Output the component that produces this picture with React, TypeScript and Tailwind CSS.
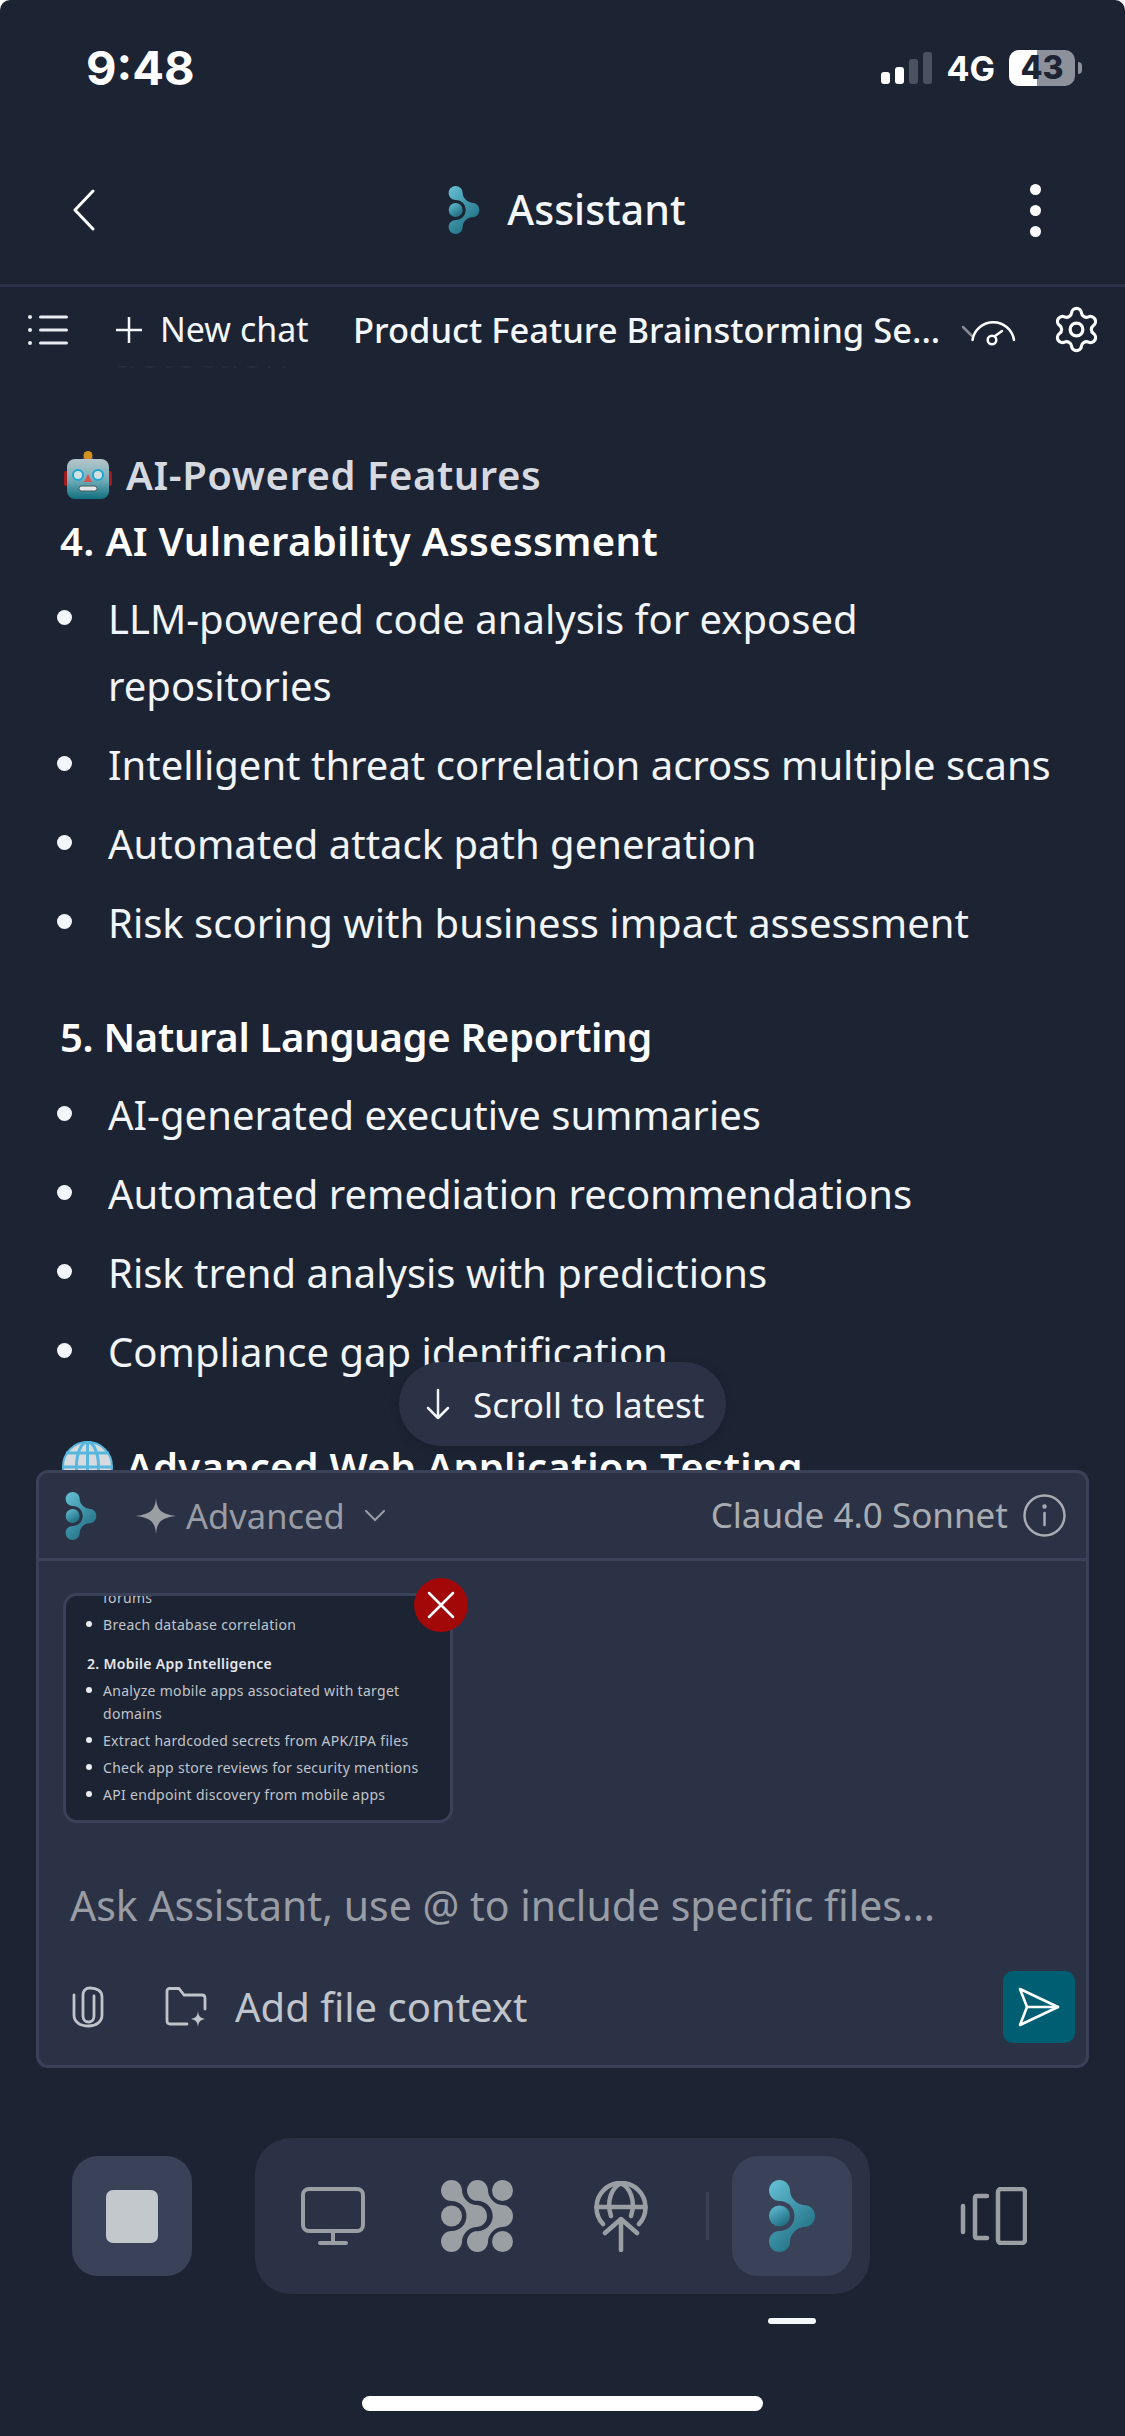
import { Settings } from 'lucide-react';

const fontStack = '[font-family:"Noto_Sans",sans-serif]';

const logoPath =
  'M10.5 0C16.3 0 21 4.7 21 10.5C21 17 27 24.5 35 25C41 25 46 29.5 46 36C46 42.5 41 47 35 47C27 47.5 21 55 21 61.5C21 67.3 16.3 72 10.5 72C4.7 72 0 67.3 0 61.5C0 55.7 4.7 51 10.5 51C19 51 25.5 44.5 25.5 36C25.5 27.5 19 21 10.5 21C4.7 21 0 16.3 0 10.5C0 4.7 4.7 0 10.5 0Z';

const sections = [
  {
    title: '4. AI Vulnerability Assessment',
    titleClass: 'tracking-[0.36px]',
    items: [
      ['LLM-powered code analysis for exposed', 'repositories'],
      ['Intelligent threat correlation across multiple scans'],
      ['Automated attack path generation'],
      ['Risk scoring with business impact assessment'],
    ],
  },
  {
    title: '5. Natural Language Reporting',
    titleClass: '-tracking-[0.3px]',
    items: [
      ['AI-generated executive summaries'],
      ['Automated remediation recommendations'],
      ['Risk trend analysis with predictions'],
      ['Compliance gap identification'],
    ],
  },
];

const thumbItems = [
  ['Analyze mobile apps associated with target', 'domains'],
  ['Extract hardcoded secrets from APK/IPA files'],
  ['Check app store reviews for security mentions'],
  ['API endpoint discovery from mobile apps'],
];

function Logo({ id, className }: { id: string; className: string }) {
  return (
    <svg viewBox="0 0 46 72" className={className}>
      <defs>
        <linearGradient id={id} x1="0.1" y1="0" x2="0.75" y2="1">
          <stop offset="0" stopColor="#63bdd2" />
          <stop offset="0.55" stopColor="#3b8ea3" />
          <stop offset="1" stopColor="#1c6a7d" />
        </linearGradient>
      </defs>
      <path fill={`url(#${id})`} d={logoPath} />
      <circle cx="10.5" cy="36" r="10.5" fill={`url(#${id})`} />
    </svg>
  );
}

function RobotEmoji() {
  return (
    <svg viewBox="0 0 48 48" className="ml-[4px] h-[48px] w-[48px] shrink-0">
      <defs>
        <linearGradient id="robotFace" x1="0" y1="0" x2="0" y2="1">
          <stop offset="0" stopColor="#b5c4c8" />
          <stop offset="0.5" stopColor="#76b0bb" />
          <stop offset="1" stopColor="#11707f" />
        </linearGradient>
      </defs>
      <rect x="0" y="20" width="5" height="15" rx="2" fill="#a11a1e" />
      <rect x="43" y="20" width="5" height="15" rx="2" fill="#a11a1e" />
      <ellipse cx="24" cy="8.5" rx="5.5" ry="3.5" fill="#6a5690" />
      <circle cx="24" cy="4.5" r="4.5" fill="#d2911f" />
      <rect x="3" y="8" width="42" height="40" rx="8" fill="url(#robotFace)" />
      <circle cx="14" cy="24" r="5" fill="#d3e0e2" stroke="#1ba7cf" strokeWidth="2" />
      <circle cx="34" cy="24" r="5" fill="#d3e0e2" stroke="#1ba7cf" strokeWidth="2" />
      <path d="M24 23l4 8h-8z" fill="#d9544f" />
      <rect x="15" y="35" width="18" height="5" rx="2.5" fill="#e2e7e8" stroke="#48585e" strokeWidth="1" />
    </svg>
  );
}

function GlobeEmoji() {
  return (
    <svg viewBox="0 0 51 51" className="ml-[2px] h-[51px] w-[51px] shrink-0">
      <circle cx="25.5" cy="25.5" r="24.5" fill="#d7dbe0" stroke="#58b7de" strokeWidth="2" />
      <g fill="none" stroke="#58b7de" strokeWidth="3">
        <ellipse cx="25.5" cy="25.5" rx="11" ry="24.5" />
        <path d="M25.5 1V50M4 12H47M1 26H50" />
      </g>
    </svg>
  );
}

function GridIcon() {
  return (
    <svg viewBox="0 0 72 72" className="h-[72px] w-[72px]" fill="#9a9fa4">
      <circle cx="61.5" cy="10.5" r="10.5" />
      <circle cx="61.5" cy="61.5" r="10.5" />
      <g transform="translate(26 0)">
        <path d={logoPath} />
      </g>
      <path d="M22 4C20 16 27 22 32 24" fill="none" stroke="#2c3245" strokeWidth="3" />
      <path d="M22 68C20 56 27 50 32 48" fill="none" stroke="#2c3245" strokeWidth="3" />
      <path d={logoPath} />
      <circle cx="10.5" cy="36" r="10.5" />
      <path d="M36 22C46 24 50 30 50 36C50 42 46 48 36 50" fill="none" stroke="#2c3245" strokeWidth="3" />
    </svg>
  );
}

function BulletRow({ lines }: { lines: string[] }) {
  return (
    <li className="flex">
      <span className="mt-[25px] -ml-[3px] mr-[36px] h-[15px] w-[15px] shrink-0 rounded-full bg-[#f3f6fa]" />
      <span>
        {lines.map((line) => (
          <span key={line} className="block whitespace-nowrap">
            {line}
          </span>
        ))}
      </span>
    </li>
  );
}

export default function App() {
  return (
    <div className={`flex h-[2436px] w-[1125px] flex-col overflow-hidden rounded-t-[10px] bg-[#1c2333] ${fontStack}`}>
      {/* status bar */}
      <div className="flex h-[136px] shrink-0 items-center justify-between pl-[86px] pr-[43px] text-white">
        <span className="text-[47px] font-bold [font-family:Inter,sans-serif]">9:48</span>
        <div className="flex items-center">
          <div className="flex items-end gap-[5px]">
            <span className="h-[12px] w-[9px] rounded-[3px] bg-white" />
            <span className="h-[17px] w-[9px] rounded-[3px] bg-white" />
            <span className="h-[25px] w-[9px] rounded-[3px] bg-[#4a5160]" />
            <span className="h-[32px] w-[9px] rounded-[3px] bg-[#4a5160]" />
          </div>
          <span className="ml-[14px] text-[34px] font-bold [font-family:Inter,sans-serif]">4G</span>
          <div className="relative ml-[14px] flex h-[36px] w-[66px] items-center justify-center overflow-hidden rounded-[10px] bg-[#8d919c]">
            <span className="absolute inset-y-0 left-0 w-[28px] bg-white" />
            <span className="relative text-[32px] font-extrabold leading-none text-[#1c2333] [font-family:Inter,sans-serif]">43</span>
          </div>
          <span className="ml-[3px] h-[12px] w-[4px] rounded-r-full bg-[#8d919c]" />
        </div>
      </div>

      {/* title bar */}
      <div className="flex h-[151px] shrink-0 items-center justify-between border-b-[3px] border-[#2c3245] pl-[72px] pr-[84px]">
        <svg viewBox="0 0 24 42" className="h-[42px] w-[24px]" fill="none" stroke="#ffffff" strokeWidth="3" strokeLinecap="round" strokeLinejoin="round">
          <path d="M21 2L3 21L21 40" />
        </svg>
        <div className="ml-[8px] flex items-center gap-[27px]">
          <Logo id="navLogo" className="h-[48px] w-[32px]" />
          <span className="text-[41px] font-medium text-[#f4f7fb]">Assistant</span>
        </div>
        <div className="flex flex-col gap-[10px]">
          <span className="h-[11px] w-[11px] rounded-full bg-white" />
          <span className="h-[11px] w-[11px] rounded-full bg-white" />
          <span className="h-[11px] w-[11px] rounded-full bg-white" />
        </div>
      </div>

      {/* chat toolbar */}
      <div className="flex h-[79px] shrink-0 items-center pl-[28px] pt-[6px] text-[#f4f7fb]">
        <svg viewBox="0 0 40 30" className="h-[30px] w-[40px]" fill="#e8ecf1">
          <circle cx="2" cy="2" r="2" />
          <circle cx="2" cy="15" r="2" />
          <circle cx="2" cy="28" r="2" />
          <rect x="11" y="0.5" width="29" height="3" rx="1.5" />
          <rect x="11" y="13.5" width="29" height="3" rx="1.5" />
          <rect x="11" y="26.5" width="29" height="3" rx="1.5" />
        </svg>
        <svg viewBox="0 0 28 28" className="ml-[47px] h-[28px] w-[28px]" stroke="#f4f7fb" strokeWidth="2.5">
          <path d="M14 1V27M1 14H27" />
        </svg>
        <span className="ml-[17px] w-[193px] whitespace-nowrap text-[34px]">New chat</span>
        <span className="w-[607px] whitespace-nowrap text-[34.5px] font-medium">Product Feature Brainstorming Se...</span>
        <svg viewBox="20 22 58 32" className="h-[32px] w-[58px]" fill="none" stroke="#ffffff" strokeWidth="2.5" strokeLinecap="round">
          <path d="M23 35L32 44" stroke="#878b92" />
          <path d="M32.5 48A21 21 0 0 1 74 48" />
          <circle cx="52" cy="48" r="4.3" />
          <path d="M55 44L62 39" />
        </svg>
        <Settings className="ml-[33px] h-[51px] w-[51px]" strokeWidth={1.5} color="#ffffff" />
      </div>

      {/* messages, clipped by the composer */}
      <div className="relative h-[1104px] shrink-0 overflow-hidden px-[60px] text-[40px] leading-[67px] text-[#f1f4f8]">
        <p className="-mt-[47px] pl-[52px] text-[#262c3c]">detection</p>
        <h3 className="mt-[55px] flex items-center gap-[14px] font-semibold tracking-[0.55px] text-[#d6dae0]">
          <RobotEmoji />
          AI-Powered Features
        </h3>
        {sections.map((section, index) => (
          <section key={section.title} className={index === 0 ? '-mt-[1px]' : 'mt-[47px]'}>
            <h4 className={`font-semibold text-white ${section.titleClass}`}>{section.title}</h4>
            <ul className="mt-[11px] flex flex-col gap-[12px]">
              {section.items.map((lines) => (
                <BulletRow key={lines[0]} lines={lines} />
              ))}
            </ul>
          </section>
        ))}
        <h3 className="mt-[48px] flex items-center gap-[13px] font-semibold tracking-[0.2px] text-white">
          <GlobeEmoji />
          Advanced Web Application Testing
        </h3>

        <div className="absolute left-[399px] top-[996px] flex h-[84px] w-[327px] items-center gap-[22px] rounded-[42px] bg-[#2c3245] pl-[26px] text-[35px] shadow-[0_2px_12px_rgba(0,0,0,0.12)]">
          <svg viewBox="0 0 26 32" className="h-[32px] w-[26px]" fill="none" stroke="#f1f4f8" strokeWidth="2.5" strokeLinecap="round" strokeLinejoin="round">
            <path d="M13 2V30M3 20L13 30L23 20" />
          </svg>
          <span className="whitespace-nowrap">Scroll to latest</span>
        </div>
      </div>

      {/* composer */}
      <div className="mx-[36px] shrink-0 rounded-[12px] border-[3px] border-[#3a4259] bg-[#2c3245]">
        <div className="flex h-[88px] items-center border-b-[3px] border-[#3a4259] pl-[26px] pr-[20px]">
          <Logo id="composerLogo" className="h-[48px] w-[32px]" />
          <svg viewBox="0 0 40 36" className="ml-[39px] h-[36px] w-[40px]" fill="#9a9fa4">
            <path d="M20 0C21 12 25 16 40 18C25 20 21 24 20 36C19 24 15 20 0 18C15 16 19 12 20 0Z" />
          </svg>
          <span className="ml-[10px] text-[34.5px] text-[#989ca4]">Advanced</span>
          <svg viewBox="0 0 20 12" className="ml-[20px] h-[12px] w-[20px]" fill="none" stroke="#989ca4" strokeWidth="2" strokeLinecap="round">
            <path d="M1 1L10 10L19 1" />
          </svg>
          <span className="ml-auto text-[35px] text-[#a8acb3]">Claude 4.0 Sonnet</span>
          <svg viewBox="0 0 43 43" className="ml-[15px] h-[43px] w-[43px]" fill="none" stroke="#a8acb3" strokeWidth="2.5" strokeLinecap="round">
            <circle cx="21.5" cy="21.5" r="20" />
            <path d="M21.5 19V31" />
            <circle cx="21.5" cy="12.5" r="1" />
          </svg>
        </div>

        <div className="pl-[24px] pt-[32px]">
          <div className="relative h-[230px] w-[390px] rounded-[14px] border-[3px] border-[#3a4259] bg-[#1c2333]">
            <div className="h-full overflow-hidden rounded-[11px] px-[21px] text-[14px] leading-[23px] tracking-[0.3px] text-[#c0c5cc]">
              <p className="-mt-[10px] pl-[16px]">forums</p>
              <p className="mt-[4px] flex">
                <span className="-ml-[1px] mr-[11px] mt-[8px] h-[6px] w-[6px] shrink-0 rounded-full bg-[#e8ecf1]" />
                Breach database correlation
              </p>
              <p className="mt-[16px] font-semibold text-[#e5e7eb]">2. Mobile App Intelligence</p>
              <ul className="mt-[4px] flex flex-col gap-[4px]">
                {thumbItems.map((lines) => (
                  <li key={lines[0]} className="flex">
                    <span className="-ml-[1px] mr-[11px] mt-[8px] h-[6px] w-[6px] shrink-0 rounded-full bg-[#e8ecf1]" />
                    <span>
                      {lines.map((line) => (
                        <span key={line} className="block whitespace-nowrap">
                          {line}
                        </span>
                      ))}
                    </span>
                  </li>
                ))}
              </ul>
            </div>
            <div className="absolute -right-[18px] -top-[18px] flex h-[54px] w-[54px] items-center justify-center rounded-full bg-[#a30808]">
              <svg viewBox="0 0 28 28" className="h-[28px] w-[28px]" stroke="#ffffff" strokeWidth="2.5" strokeLinecap="round">
                <path d="M2 2L26 26M26 2L2 26" />
              </svg>
            </div>
          </div>
        </div>

        <p className="mt-[57px] whitespace-nowrap pl-[31px] text-[41px] leading-[50px] text-[#989ca4]">
          Ask Assistant, use @ to include specific files...
        </p>

        <div className="mb-[22px] mt-[41px] flex h-[72px] items-center pl-[33px] pr-[11px]">
          <svg viewBox="0 0 32 42" className="h-[42px] w-[32px]" fill="none" stroke="#c0c4cb" strokeWidth="2.8" strokeLinecap="round">
            <path d="M22 10V30C22 34 19.5 36 16.5 36C13.5 36 11 34 11 30V9C11 5 13.5 2 18 2C25 2 30 5 30 11V29C30 36 24 40 16.5 40C8 40 2 36 2 29V9" />
          </svg>
          <svg viewBox="0 0 42 41" className="ml-[61px] h-[41px] w-[42px]" fill="none" stroke="#c0c4cb" strokeWidth="2.8" strokeLinecap="round" strokeLinejoin="round">
            <path d="M22 37H5C3 37 2 36 2 34V4C2 2.5 3 1.5 4.5 1.5H14L19 8H37C39 8 40 9 40 11V22" />
            <path d="M33 24C33.5 29 35 31 40 32C35 33 33.5 35 33 40C32.5 35 31 33 26 32C31 31 32.5 29 33 24Z" fill="#c0c4cb" stroke="none" />
          </svg>
          <span className="ml-[28px] text-[40px] text-[#c0c4cb]">Add file context</span>
          <div className="ml-auto flex h-[72px] w-[72px] items-center justify-center rounded-[10px] bg-[#005e72]">
            <svg viewBox="0 0 42 40" className="h-[40px] w-[42px]" fill="none" stroke="#ffffff" strokeWidth="2.6" strokeLinejoin="round" strokeLinecap="round">
              <path d="M2 2L40 20L2 38L9 20Z" />
              <path d="M9 20H40" />
            </svg>
          </div>
        </div>
      </div>

      {/* bottom dock */}
      <div className="mt-[70px] flex shrink-0 items-center pl-[72px]">
        <div className="flex h-[120px] w-[120px] items-center justify-center rounded-[26px] bg-[#3a4259]">
          <span className="h-[53px] w-[52px] rounded-[7px] bg-[#c3c8cc]" />
        </div>
        <div className="ml-[63px] flex h-[156px] w-[615px] items-center rounded-[36px] bg-[#2c3245] pl-[46px]">
          <svg viewBox="0 0 64 58" className="h-[58px] w-[64px]" fill="none" stroke="#9a9fa4" strokeWidth="4" strokeLinecap="round">
            <rect x="2" y="2" width="60" height="42" rx="6" />
            <path d="M32 44V55M19 56H45" />
          </svg>
          <div className="ml-[76px]">
            <GridIcon />
          </div>
          <svg viewBox="0 0 54 71" className="ml-[81px] h-[71px] w-[54px]" fill="none" stroke="#9a9fa4" strokeWidth="4.5" strokeLinecap="round" strokeLinejoin="round">
            <path d="M9 43A24.5 24.5 0 1 1 45 43" />
            <path d="M2.5 26H51.5M17 35C12 20 18 6 27 2.5C36 6 42 20 37 35" />
            <path d="M27 69V38M11 52L27 38L43 52" />
          </svg>
          <span className="ml-[58px] h-[48px] w-[3px] bg-[#3a4259]" />
          <div className="ml-[23px] flex h-[120px] w-[120px] items-center justify-center rounded-[26px] bg-[#3a4259]">
            <Logo id="dockLogo" className="h-[72px] w-[46px]" />
          </div>
        </div>
        <svg viewBox="0 0 67 58" className="ml-[90px] h-[58px] w-[67px]" fill="none" stroke="#9a9fa4" strokeWidth="4.5" strokeLinecap="round" strokeLinejoin="round">
          <rect x="38" y="2" width="27" height="54" rx="3" />
          <path d="M27 9H17C15.5 9 15 10 15 11V49C15 50 15.5 51 17 51H27" />
          <path d="M3 19V45" />
        </svg>
      </div>

      <span className="ml-[768px] mt-[24px] h-[6px] w-[48px] shrink-0 rounded-full bg-[#f4f7fb]" />

      <div className="mt-[72px] h-[15px] w-[401px] shrink-0 self-center rounded-full bg-white" />
    </div>
  );
}
